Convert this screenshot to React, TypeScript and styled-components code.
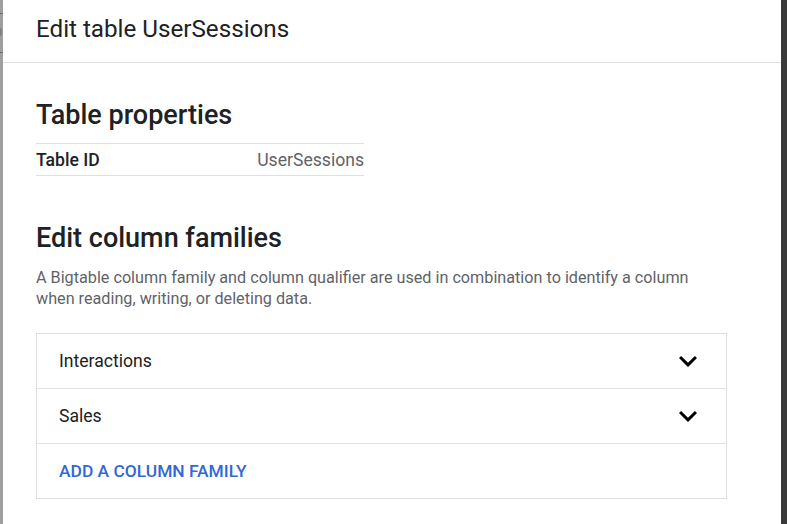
import React from "react";
import styled, { createGlobalStyle } from "styled-components";

const Global = createGlobalStyle`
  html, body { margin: 0; padding: 0; }
  body { font-family: Roboto, "Noto Sans", Arial, sans-serif; background: #fff; }
  * { box-sizing: border-box; }
`;

const Screen = styled.div`
  width: 787px;
  height: 524px;
  display: flex;
  overflow: hidden;
`;

const LeftScrim = styled.div`
  width: 3px;
  flex: none;
  background: #9e9e9e;
  display: flex;
  flex-direction: column;
`;

const ScrimLine = styled.div<{ $top: number }>`
  margin-top: ${(p) => p.$top}px;
  height: 1px;
  background: #6d6d6d;
`;

const ScrimDot = styled.div`
  margin-top: 14px;
  height: 8px;
  width: 2px;
  border-radius: 0 4px 4px 0;
  background: #7a8592;
`;

const RightScrim = styled.div`
  width: 6px;
  flex: none;
  background: #3a3a3a;
`;

const Dialog = styled.div`
  flex: 1;
  background: #fff;
  border-top-right-radius: 8px;
  display: flex;
  flex-direction: column;
`;

const Header = styled.div`
  height: 63px;
  border-bottom: 1px solid #e0e0e0;
  display: flex;
  align-items: center;
  padding: 0 0 4px 33px;
`;

const Title = styled.h1`
  margin: 0;
  font-size: 24.2px;
  font-weight: 400;
  color: #202124;
`;

const Content = styled.div`
  padding: 36px 0 0 33px;
  display: flex;
  flex-direction: column;
`;

const SectionHeading = styled.h2<{ $mt?: number }>`
  margin: ${(p) => p.$mt ?? 0}px 0 0 0;
  font-size: 27px;
  line-height: 32px;
  font-weight: 500;
  color: #202124;
`;

const PropTable = styled.div`
  margin-top: 12px;
  width: 328px;
  border-top: 1px solid #e0e0e0;
  border-bottom: 1px solid #e0e0e0;
  height: 33px;
  display: flex;
  align-items: center;
  justify-content: space-between;
`;

const PropLabel = styled.span`
  font-size: 17.6px;
  font-weight: 500;
  color: #202124;
`;

const PropValue = styled.span`
  font-size: 17.6px;
  color: #5f6368;
`;

const Description = styled.p`
  margin: 13px 0 0 0;
  width: 690px;
  font-size: 16.2px;
  line-height: 21px;
  color: #5f6368;
`;

const Families = styled.div`
  margin-top: 24px;
  width: 691px;
  border: 1px solid #e0e0e0;
  display: flex;
  flex-direction: column;
`;

const FamilyRow = styled.div<{ $last?: boolean }>`
  height: ${(p) => (p.$last ? 54 : 55)}px;
  border-bottom: ${(p) => (p.$last ? "none" : "1px solid #e0e0e0")};
  display: flex;
  align-items: center;
  justify-content: space-between;
  padding: 0 20px 0 22px;
`;

const FamilyName = styled.span`
  font-size: 17.6px;
  color: #202124;
`;

const AddButton = styled.span`
  font-size: 17.4px;
  font-weight: 500;
  color: #3367d6;
  text-transform: uppercase;
`;

const ChevronBox = styled.svg`
  width: 36px;
  height: 36px;
  display: block;
  fill: #000;
`;

const Chevron = () => (
  <ChevronBox viewBox="0 0 24 24">
    <path d="M16.59 8.59L12 13.17 7.41 8.59 6 10l6 6 6-6z" />
  </ChevronBox>
);

export default function App() {
  const families = ["Interactions", "Sales"];
  return (
    <>
      <Global />
      <Screen>
        <LeftScrim>
          <ScrimLine $top={13} />
          <ScrimDot />
          <ScrimLine $top={16} />
        </LeftScrim>
        <Dialog>
          <Header>
            <Title>Edit table UserSessions</Title>
          </Header>
          <Content>
            <SectionHeading>Table properties</SectionHeading>
            <PropTable>
              <PropLabel>Table ID</PropLabel>
              <PropValue>UserSessions</PropValue>
            </PropTable>
            <SectionHeading $mt={46}>Edit column families</SectionHeading>
            <Description>
              A Bigtable column family and column qualifier are used in combination to identify a column
              when reading, writing, or deleting data.
            </Description>
            <Families>
              {families.map((f) => (
                <FamilyRow key={f}>
                  <FamilyName>{f}</FamilyName>
                  <Chevron />
                </FamilyRow>
              ))}
              <FamilyRow $last>
                <AddButton>Add a column family</AddButton>
              </FamilyRow>
            </Families>
          </Content>
        </Dialog>
        <RightScrim />
      </Screen>
    </>
  );
}
